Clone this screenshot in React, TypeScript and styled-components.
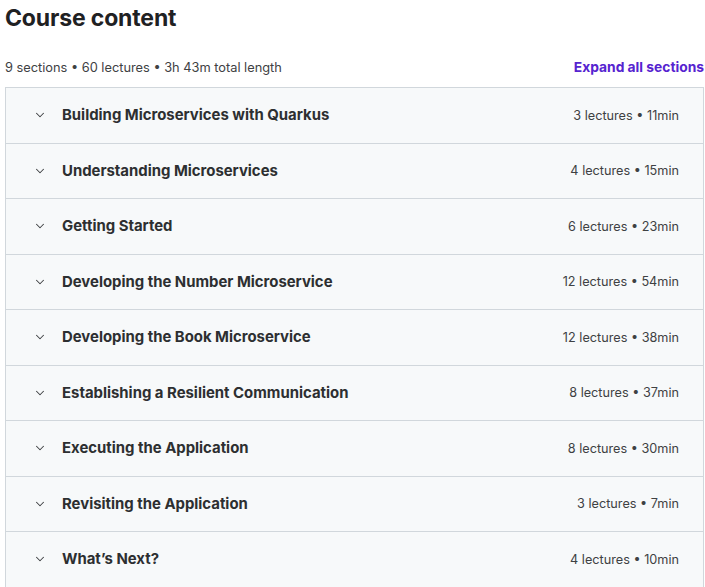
import styled, { createGlobalStyle } from 'styled-components';

const sections = [
  { title: 'Building Microservices with Quarkus', lectures: 3, length: '11min' },
  { title: 'Understanding Microservices', lectures: 4, length: '15min' },
  { title: 'Getting Started', lectures: 6, length: '23min' },
  { title: 'Developing the Number Microservice', lectures: 12, length: '54min' },
  { title: 'Developing the Book Microservice', lectures: 12, length: '38min' },
  { title: 'Establishing a Resilient Communication', lectures: 8, length: '37min' },
  { title: 'Executing the Application', lectures: 8, length: '30min' },
  { title: 'Revisiting the Application', lectures: 3, length: '7min' },
  { title: 'What\u2019s Next?', lectures: 4, length: '10min' },
];

const GlobalStyle = createGlobalStyle`
  body {
    margin: 0;
    background: #fff;
    font-family: Inter, "Noto Sans", sans-serif;
    color: #2d2f31;
  }
`;

const Chevron = () => (
  <svg width="14" height="14" viewBox="0 0 24 24" fill="none" stroke="currentColor" strokeWidth="1.8" strokeLinecap="round" strokeLinejoin="round">
    <path d="M6 9l6 6 6-6" />
  </svg>
);

const App = () => (
  <>
    <GlobalStyle />
    <Page>
      <Heading>Course content</Heading>
      <MetaRow>
        <Meta>9 sections • 60 lectures • 3h 43m total length</Meta>
        <ExpandButton>Expand all sections</ExpandButton>
      </MetaRow>
      <Accordion>
        {sections.map(({ title, lectures, length }) => (
          <SectionRow key={title}>
            <ChevronWrap>
              <Chevron />
            </ChevronWrap>
            <SectionTitle>{title}</SectionTitle>
            <SectionInfo>
              {lectures} lectures • {length}
            </SectionInfo>
          </SectionRow>
        ))}
      </Accordion>
    </Page>
  </>
);

export default App;

const Page = styled.div`
  padding: 0 1px 0 5px;
`;

const Heading = styled.h2`
  margin: 0;
  padding-top: 4px;
  font-size: 23px;
  font-weight: 700;
  line-height: 28px;
  letter-spacing: -0.15px;
  color: #1f2123;
`;

const MetaRow = styled.div`
  display: flex;
  align-items: center;
  justify-content: space-between;
  margin-top: 21px;
  height: 28px;
  margin-bottom: 6px;
`;

const Meta = styled.span`
  font-size: 12.8px;
  color: #3e4143;
`;

const ExpandButton = styled.button`
  border: none;
  background: none;
  padding: 0;
  font-family: inherit;
  font-size: 13.8px;
  font-weight: 700;
  color: #5624d0;
  cursor: pointer;
`;

const Accordion = styled.div`
  border: 1px solid #d1d7dc;
  border-bottom: none;
`;

const SectionRow = styled.div`
  display: flex;
  align-items: center;
  height: 54.5px;
  padding: 0 24px 0 27px;
  background: #f7f9fa;
  border-bottom: 1px solid #d1d7dc;
`;

const ChevronWrap = styled.span`
  display: flex;
  width: 14px;
  margin-right: 15px;
  color: #3e4143;
`;

const SectionTitle = styled.span`
  flex: 1;
  font-size: 14.9px;
  font-weight: 700;
`;

const SectionInfo = styled.span`
  font-size: 12.7px;
  color: #3e4143;
`;
